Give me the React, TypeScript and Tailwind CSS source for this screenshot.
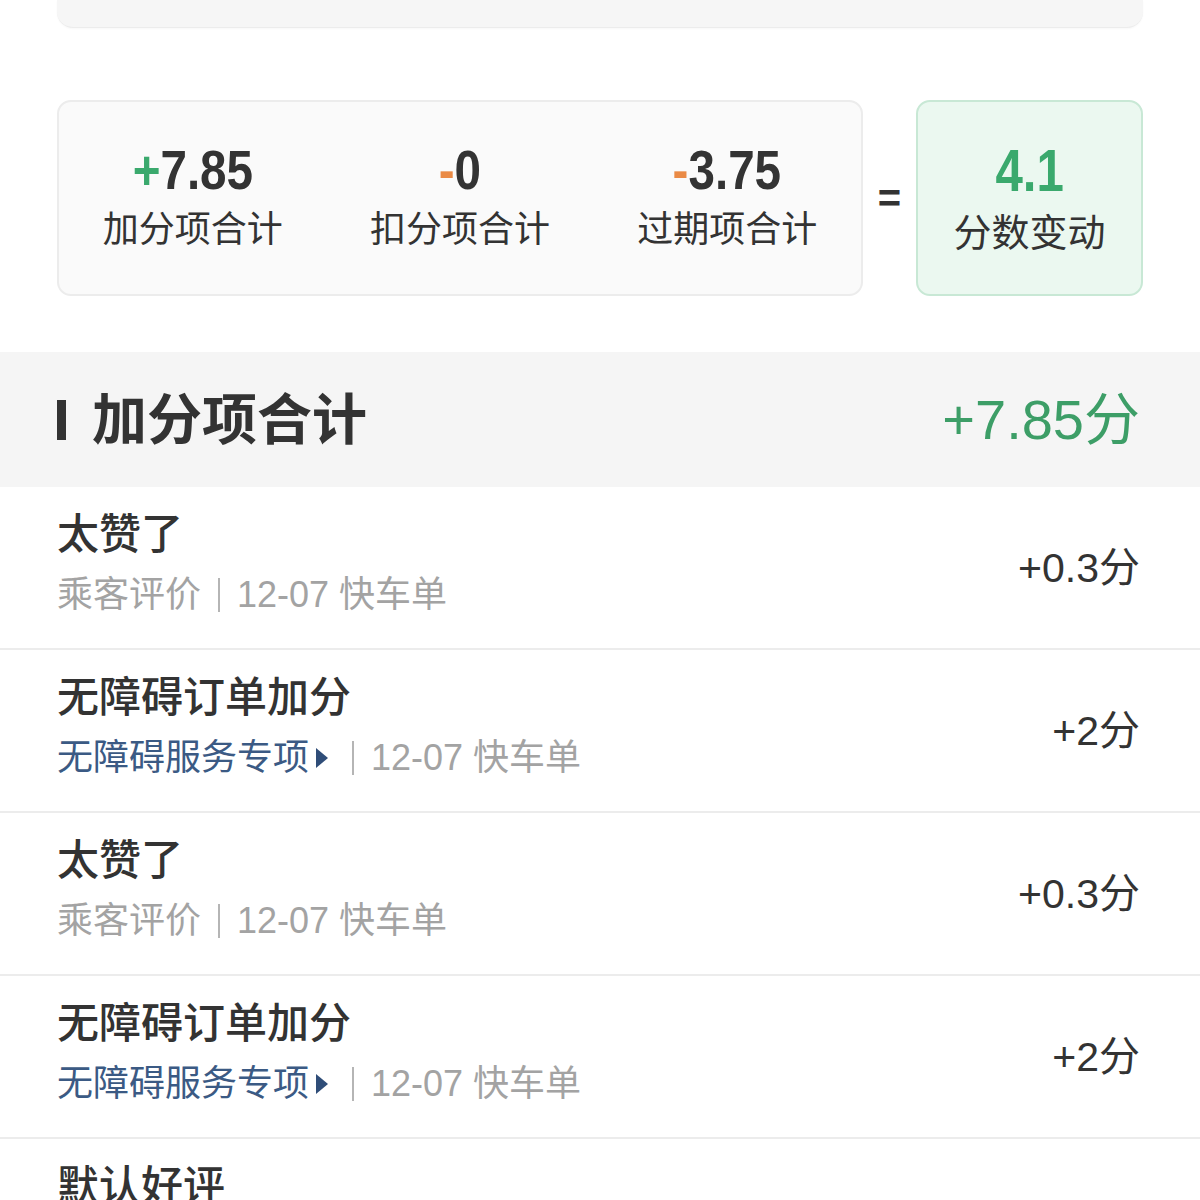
import React from "react"

const cjk = "font-['Liberation_Sans','Noto_Sans_CJK_SC',sans-serif]"
const din = "font-['Liberation_Sans','Noto_Sans_CJK_SC',sans-serif]"

interface Row {
  title: string
  source: string
  special?: boolean
  date: string
  amount: string
}

const rows: Row[] = [
  { title: "太赞了", source: "乘客评价", date: "12-07 快车单", amount: "+0.3分" },
  { title: "无障碍订单加分", source: "无障碍服务专项", special: true, date: "12-07 快车单", amount: "+2分" },
  { title: "太赞了", source: "乘客评价", date: "12-07 快车单", amount: "+0.3分" },
  { title: "无障碍订单加分", source: "无障碍服务专项", special: true, date: "12-07 快车单", amount: "+2分" },
  { title: "默认好评", source: "乘客评价", date: "12-07 快车单", amount: "+0.3分" },
]

function Stat({ sign, value, signColor, label }: { sign: string; value: string; signColor: string; label: string }) {
  return (
    <div className="flex flex-1 flex-col items-center">
      <div className={`${din} inline-block origin-center scale-x-[0.85] text-[56px] font-bold leading-[60px] text-[#333]`}>
        <span className={signColor}>{sign}</span>
        {value}
      </div>
      <div className="mt-[8px] text-[36px] leading-[44px] text-[#333]">{label}</div>
    </div>
  )
}

function ScoreRow({ row }: { row: Row }) {
  return (
    <div className="border-b-2 border-[#ececec] bg-white">
      <div className="flex h-[161px] items-center justify-between pl-[57px] pr-[60px]">
        <div className="flex flex-col gap-[14px] pb-[8px]">
          <div className="text-[42px] font-medium leading-[48px] text-[#333]">{row.title}</div>
          <div className="flex items-center text-[36px] leading-[44px] text-[#a3a3a3]">
            {row.special ? (
              <span className="flex items-center text-[#3b5a84]">
                {row.source}
                <svg width="14" height="22" viewBox="0 0 14 22" className="ml-[6px] mr-[6px]">
                  <path d="M1 1 L13 11 L1 21 Z" fill="#2f4d78" />
                </svg>
              </span>
            ) : (
              <span>{row.source}</span>
            )}
            <span className="ml-[17px] mr-[17px] h-[34px] w-[2px] bg-[#b5b5b5]" />
            <span>{row.date}</span>
          </div>
        </div>
        <div className="text-[41px] leading-[48px] text-[#333]">{row.amount}</div>
      </div>
    </div>
  )
}

export default function App() {
  return (
    <div className={`${cjk} min-h-[1200px] bg-white`}>
      <div className="px-[57px]">
        <div className="h-[28px] rounded-b-[16px] border-b border-[#ececec] bg-[#f6f6f6] shadow-[0_1px_2px_rgba(0,0,0,0.03)]" />

        <div className="mt-[72px] flex h-[196px] items-stretch">
          <div className="flex flex-1 items-center rounded-[14px] border-2 border-[#ececec] bg-[#fafafa] pb-[4px]">
            <Stat sign="+" value="7.85" signColor="text-[#3aa96d]" label="加分项合计" />
            <Stat sign="-" value="0" signColor="text-[#ea8a45]" label="扣分项合计" />
            <Stat sign="-" value="3.75" signColor="text-[#ea8a45]" label="过期项合计" />
          </div>
          <div className="flex w-[53px] items-center justify-center text-[40px] font-bold text-[#333]">=</div>
          <div className="flex w-[227px] flex-col items-center justify-center rounded-[14px] border-2 border-[#c8e8d5] bg-[#ebf8f0]">
            <div className={`${din} inline-block origin-center scale-x-[0.82] text-[60px] font-bold leading-[62px] text-[#3aa96d]`}>4.1</div>
            <div className="mt-[8px] text-[38px] leading-[46px] text-[#333]">分数变动</div>
          </div>
        </div>
      </div>

      <div className="mt-[56px] flex h-[135px] items-center justify-between bg-[#f5f5f5] pl-[57px] pr-[60px]">
        <div className="flex items-center gap-[26px]">
          <span className="h-[40px] w-[9px] bg-[#333]" />
          <span className="text-[55px] font-bold leading-[60px] text-[#333]">加分项合计</span>
        </div>
        <span className="text-[56px] leading-[60px] text-[#3d9e67]">+7.85分</span>
      </div>

      <div>
        {rows.map((row, i) => (
          <ScoreRow key={i} row={row} />
        ))}
      </div>
    </div>
  )
}
